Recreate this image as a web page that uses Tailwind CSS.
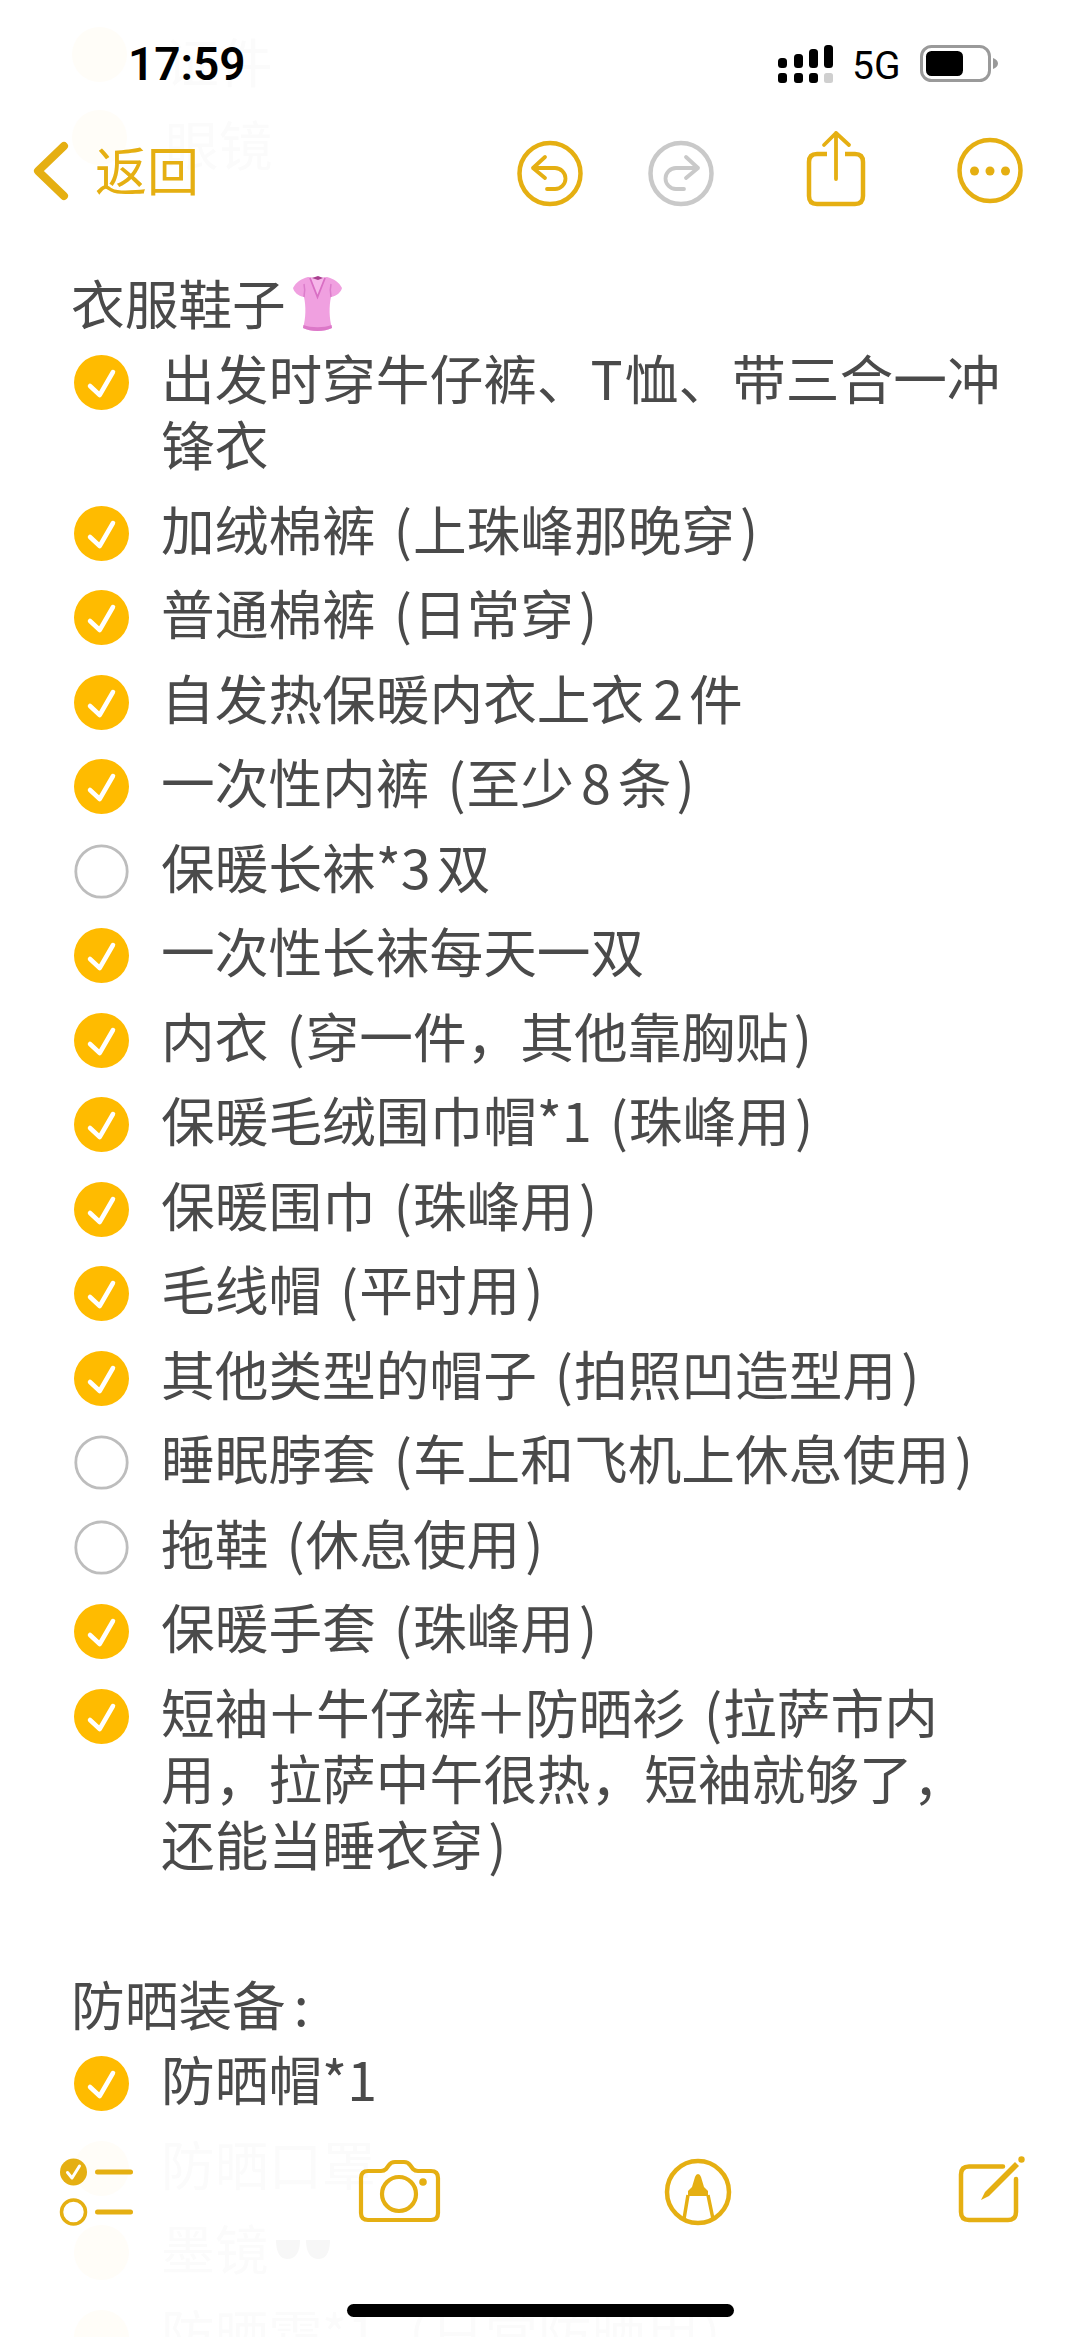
<!doctype html>
<html lang="zh">
<head>
<meta charset="utf-8">
<script src="https://cdn.jsdelivr.net/npm/@tailwindcss/browser@4"></script>
</head>
<body class="bg-white">
<svg width="0" height="0" class="absolute">
  <symbol id="on" viewBox="0 0 55 55"><circle cx="27.5" cy="27.5" r="27.5" fill="#ffbb00"/><path d="M16 31 L25.7 40 L39 17" fill="none" stroke="#fff" stroke-width="4.5" stroke-linecap="round" stroke-linejoin="round"/></symbol>
  <symbol id="off" viewBox="0 0 55 55"><circle cx="27.5" cy="27.5" r="25.7" fill="none" stroke="#bdbdbd" stroke-width="2.8"/></symbol>
  <symbol id="ghost" viewBox="0 0 55 55"><circle cx="27.5" cy="27.5" r="27.5" fill="#fffdf8"/></symbol>
</svg>
<div class="relative w-[1080px] h-[2337px] overflow-hidden bg-white text-[53.7px] leading-[66px] text-[#4a4a4a]" style="font-family:'Noto Sans CJK SC','Noto Sans',sans-serif">

  <main class="pt-[269px] pl-[71px] pr-[20px] flex flex-col">
    <div class="flex items-start h-[66px] mb-[9px]"><span>衣服鞋子</span>
      <svg class="w-[49px] h-[56px] mt-[7px] ml-[7px]" viewBox="0 0 49 56"><path d="M15 1 C8 3 3 6 0 12 C1 16 5 20 11 21 C13 30 13 42 10 52 C18 56 31 56 39 52 C36 42 36 30 38 21 C44 20 48 16 49 12 C46 6 41 3 34 1 L25 2Z" fill="#f0a0e0"/><path d="M11 21 C12 16 12 12 11 8 M38 21 C37 16 37 12 38 8" stroke="#dc7ccb" stroke-width="1.500" fill="none"/><path d="M17 2 L24.500 21 L32 2" stroke="#d96fc4" stroke-width="1.800" fill="#f6b6e9"/><path d="M19 2 L25 4 L30 2 L25 0Z" fill="#a83f8e"/><path d="M10 52 C18 56 31 56 39 52 L38.500 49 C31 52 18 52 10.500 49Z" fill="#dc78c8"/></svg>
    </div>
    <ul class="flex flex-col gap-[18.5px]">
      <li class="flex"><svg class="w-[55px] h-[55px] shrink-0 mt-[11px] mr-[32px] ml-[3px]"><use href="#on"/></svg><span>出发时穿牛仔裤、<span class="mr-[2px]">T</span>恤、带三合一冲<br>锋衣</span></li>
      <li class="flex"><svg class="w-[55px] h-[55px] shrink-0 mt-[11px] mr-[32px] ml-[3px]"><use href="#on"/></svg><span>加绒棉裤<span class="ml-[18px] mr-[1px]">(</span>上珠峰那晚穿<span class="ml-[5px]">)</span></span></li>
      <li class="flex"><svg class="w-[55px] h-[55px] shrink-0 mt-[11px] mr-[32px] ml-[3px]"><use href="#on"/></svg><span>普通棉裤<span class="ml-[18px] mr-[1px]">(</span>日常穿<span class="ml-[5px]">)</span></span></li>
      <li class="flex"><svg class="w-[55px] h-[55px] shrink-0 mt-[11px] mr-[32px] ml-[3px]"><use href="#on"/></svg><span>自发热保暖内衣上衣<span class="ml-[9px] mr-[6px]">2</span>件</span></li>
      <li class="flex"><svg class="w-[55px] h-[55px] shrink-0 mt-[11px] mr-[32px] ml-[3px]"><use href="#on"/></svg><span>一次性内裤<span class="ml-[18px] mr-[1px]">(</span>至少<span class="mx-[7px]">8</span>条<span class="ml-[5px]">)</span></span></li>
      <li class="flex"><svg class="w-[55px] h-[55px] shrink-0 mt-[11px] mr-[32px] ml-[3px]"><use href="#off"/></svg><span>保暖长袜*3<span class="ml-[6px]">双</span></span></li>
      <li class="flex"><svg class="w-[55px] h-[55px] shrink-0 mt-[11px] mr-[32px] ml-[3px]"><use href="#on"/></svg><span>一次性长袜每天一双</span></li>
      <li class="flex"><svg class="w-[55px] h-[55px] shrink-0 mt-[11px] mr-[32px] ml-[3px]"><use href="#on"/></svg><span>内衣<span class="ml-[18px] mr-[1px]">(</span>穿一件，其他靠胸贴<span class="ml-[5px]">)</span></span></li>
      <li class="flex"><svg class="w-[55px] h-[55px] shrink-0 mt-[11px] mr-[32px] ml-[3px]"><use href="#on"/></svg><span>保暖毛绒围巾帽*1<span class="ml-[18px] mr-[1px]">(</span>珠峰用<span class="ml-[5px]">)</span></span></li>
      <li class="flex"><svg class="w-[55px] h-[55px] shrink-0 mt-[11px] mr-[32px] ml-[3px]"><use href="#on"/></svg><span>保暖围巾<span class="ml-[18px] mr-[1px]">(</span>珠峰用<span class="ml-[5px]">)</span></span></li>
      <li class="flex"><svg class="w-[55px] h-[55px] shrink-0 mt-[11px] mr-[32px] ml-[3px]"><use href="#on"/></svg><span>毛线帽<span class="ml-[18px] mr-[1px]">(</span>平时用<span class="ml-[5px]">)</span></span></li>
      <li class="flex"><svg class="w-[55px] h-[55px] shrink-0 mt-[11px] mr-[32px] ml-[3px]"><use href="#on"/></svg><span>其他类型的帽子<span class="ml-[18px] mr-[1px]">(</span>拍照凹造型用<span class="ml-[5px]">)</span></span></li>
      <li class="flex"><svg class="w-[55px] h-[55px] shrink-0 mt-[11px] mr-[32px] ml-[3px]"><use href="#off"/></svg><span>睡眠脖套<span class="ml-[18px] mr-[1px]">(</span>车上和飞机上休息使用<span class="ml-[5px]">)</span></span></li>
      <li class="flex"><svg class="w-[55px] h-[55px] shrink-0 mt-[11px] mr-[32px] ml-[3px]"><use href="#off"/></svg><span>拖鞋<span class="ml-[18px] mr-[1px]">(</span>休息使用<span class="ml-[5px]">)</span></span></li>
      <li class="flex"><svg class="w-[55px] h-[55px] shrink-0 mt-[11px] mr-[32px] ml-[3px]"><use href="#on"/></svg><span>保暖手套<span class="ml-[18px] mr-[1px]">(</span>珠峰用<span class="ml-[5px]">)</span></span></li>
      <li class="flex"><svg class="w-[55px] h-[55px] shrink-0 mt-[11px] mr-[32px] ml-[3px]"><use href="#on"/></svg><span>短袖<span class="-mx-[3px]">＋</span>牛仔裤<span class="-mx-[3px]">＋</span>防晒衫<span class="ml-[18px] mr-[1px]">(</span>拉萨市内<br>用，拉萨中午很热，短袖就够了，<br>还能当睡衣穿<span class="ml-[5px]">)</span></span></li>
    </ul>
    <div class="mt-[94.500px] h-[66px] mb-[9px]">防晒装备<span class="ml-[8px]">:</span></div>
    <ul class="flex flex-col gap-[18.5px]">
      <li class="flex"><svg class="w-[55px] h-[55px] shrink-0 mt-[11px] mr-[32px] ml-[3px]"><use href="#on"/></svg><span>防晒帽*1</span></li>
      <li class="flex text-[#fbfbfb]"><svg class="w-[55px] h-[55px] shrink-0 mt-[11px] mr-[32px] ml-[3px]"><use href="#ghost"/></svg><span>防晒口罩</span></li>
      <li class="flex items-start text-[#fbfbfb]"><svg class="w-[55px] h-[55px] shrink-0 mt-[11px] mr-[32px] ml-[3px]"><use href="#ghost"/></svg><span>墨镜</span><svg class="w-[54px] h-[22px] mt-[24px] ml-[8px]" viewBox="0 0 54 22"><path d="M0 2 H24 C24 14 20 21 11 21 C3 21 0 12 0 2Z M30 2 H54 C54 12 51 21 43 21 C34 21 30 14 30 2Z" fill="#f7f7f7"/></svg></li>
      <li class="flex text-[#fbfbfb]"><svg class="w-[55px] h-[55px] shrink-0 mt-[11px] mr-[32px] ml-[3px]"><use href="#ghost"/></svg><span>防晒霜*1（日常防晒用）</span></li>
    </ul>
  </main>

  <!-- top bars -->
  <header class="absolute inset-x-0 top-0 h-[220px]">
    <div class="absolute left-[72px] top-[27px] flex gap-[38px] text-[#fbfbfb]"><svg class="w-[55px] h-[55px]"><use href="#ghost"/></svg><span>证件</span></div>
    <div class="absolute left-[72px] top-[110px] flex gap-[38px] text-[#fbfbfb]"><svg class="w-[55px] h-[55px]"><use href="#ghost"/></svg><span>眼镜</span></div>
    <div class="absolute left-[128px] top-[36px] text-[46px] leading-[56px] font-semibold text-black" style="font-family:Roboto,sans-serif">17:59</div>
    <svg class="absolute left-[776px] top-[43px]" width="60" height="42" viewBox="0 0 60 42">
      <g fill="#000"><rect x="2" y="15" width="9" height="10" rx="3.5"/><rect x="18" y="11" width="9" height="14" rx="3.5"/><rect x="33" y="6" width="9" height="19" rx="3.5"/><rect x="48" y="2" width="9" height="23" rx="3.5"/>
      <rect x="2" y="30" width="9" height="10" rx="3"/><rect x="18" y="30" width="9" height="10" rx="3"/><rect x="33" y="30" width="9" height="10" rx="3"/></g>
      <rect x="48" y="30" width="9" height="10" rx="2.5" fill="#cfcfcf"/>
    </svg>
    <div class="absolute left-[852px] top-[42px] text-[39px] leading-[48px] text-black" style="font-family:Roboto,sans-serif">5G</div>
    <svg class="absolute left-[918px] top-[44px]" width="84" height="42" viewBox="0 0 84 42">
      <rect x="3.5" y="2.5" width="68" height="34" rx="10" fill="none" stroke="#9a9a9a" stroke-width="3"/>
      <rect x="8" y="7" width="37" height="25" rx="5.5" fill="#000"/>
      <path d="M75 14 C78 15 80 17 80 19.500 C80 22 78 24 75 25Z" fill="#9a9a9a"/>
    </svg>

    <svg class="absolute left-[30px] top-[138px]" width="44" height="66" viewBox="0 0 44 66"><path d="M34 8 L8 33 L34 58" fill="none" stroke="#e5af12" stroke-width="8" stroke-linecap="round" stroke-linejoin="round"/></svg>
    <div class="absolute left-[95px] top-[138px] text-[52px] leading-[62px] text-[#e5af12]">返回</div>

    <svg class="absolute left-[517px] top-[140px]" width="66" height="67" viewBox="0 0 66 67" fill="none" stroke="#e5af12" stroke-width="4.5" stroke-linecap="round" stroke-linejoin="round"><circle cx="33" cy="33.5" r="30.5"/><path d="M28 17 L16 28 L28 38 M16 28 H38 A10.5 10.5 0 0 1 38 49 H30" stroke-width="3.8"/></svg>
    <svg class="absolute left-[648px] top-[140px]" width="66" height="67" viewBox="0 0 66 67" fill="none" stroke="#c9c9c9" stroke-width="4.5" stroke-linecap="round" stroke-linejoin="round"><circle cx="33" cy="33.5" r="30.5"/><path d="M38 17 L50 28 L38 38 M50 28 H28 A10.5 10.5 0 0 0 28 49 H36" stroke-width="3.8"/></svg>
    <svg class="absolute left-[805px] top-[130px]" width="62" height="78" viewBox="0 0 62 78" fill="none" stroke="#e5af12" stroke-width="4.5" stroke-linecap="round" stroke-linejoin="round"><path d="M31 49 V3 M19 15 L31 3 L44 15" stroke-width="3.8"/><path d="M22 24 H12 Q4 24 4 32 V66 Q4 74 12 74 H50 Q58 74 58 66 V32 Q58 24 50 24 H40" stroke-linecap="butt"/></svg>
    <svg class="absolute left-[957px] top-[137px]" width="66" height="67" viewBox="0 0 66 67"><circle cx="33" cy="33.5" r="30.5" fill="none" stroke="#e5af12" stroke-width="4.5"/><g fill="#e5af12"><circle cx="17.500" cy="34" r="4.500"/><circle cx="33" cy="34" r="4.500"/><circle cx="48.500" cy="34" r="4.500"/></g></svg>
  </header>

  <!-- bottom toolbar -->
  <footer class="absolute inset-x-0 bottom-0 h-[190px]">
    <svg class="absolute left-[58px] top-[10px]" width="76" height="72" viewBox="0 0 76 72">
      <circle cx="15.500" cy="15" r="13.500" fill="#e5af12"/><path d="M9.500 15.500 L14 21 L21.500 9" fill="none" stroke="#fff" stroke-width="3" stroke-linecap="round" stroke-linejoin="round"/>
      <circle cx="15.500" cy="55" r="12" fill="none" stroke="#e5af12" stroke-width="3.500"/>
      <rect x="37" y="12.500" width="38" height="5" rx="2.500" fill="#e5af12"/><rect x="37" y="52.500" width="38" height="5" rx="2.500" fill="#e5af12"/>
    </svg>
    <svg class="absolute left-[357px] top-[11px]" width="85" height="66" viewBox="0 0 85 66" fill="none" stroke="#e5af12" stroke-width="4.2" stroke-linejoin="round"><path d="M11 13 H24 Q27 13 29 11 L32 7 Q34 4 38 4 H47 Q51 4 53 7 L56 11 Q58 13 61 13 H74 Q81 13 81 20 V55 Q81 62 74 62 H11 Q4 62 4 55 V20 Q4 13 11 13Z"/><circle cx="42" cy="36" r="17"/><circle cx="66" cy="24" r="3.800" fill="#e5af12" stroke="none"/></svg>
    <svg class="absolute left-[662px] top-[9px]" width="72" height="72" viewBox="0 0 72 72" fill="none" stroke="#e5af12" stroke-width="4.500" stroke-linejoin="round"><circle cx="36" cy="36" r="31"/><path d="M26 39 L22 63 M46 39 L51 63" stroke-width="3.500"/><path d="M36 18 Q38 18 39 21 L42 31 L46 35 V40 H26 V35 L30 31 L33 21 Q34 18 36 18Z" fill="#e5af12" stroke="none"/></svg>
    <svg class="absolute left-[957px] top-[8px]" width="72" height="70" viewBox="0 0 72 70" fill="none" stroke="#e5af12" stroke-width="4.500" stroke-linecap="round" stroke-linejoin="round"><path d="M46 11.500 H12 Q4 11.500 4 19.500 V57 Q4 65 12 65 H51 Q59 65 59 57 V24"/><path d="M24 45 L28 37 L58 7 L62 11 L32 41Z" fill="#e5af12" stroke="none"/><circle cx="64.500" cy="4.500" r="3.200" fill="#e5af12" stroke="none"/></svg>
    <div class="absolute left-[347px] top-[157px] w-[387px] h-[13px] rounded-full bg-black"></div>
  </footer>
</div>
</body>
</html>
